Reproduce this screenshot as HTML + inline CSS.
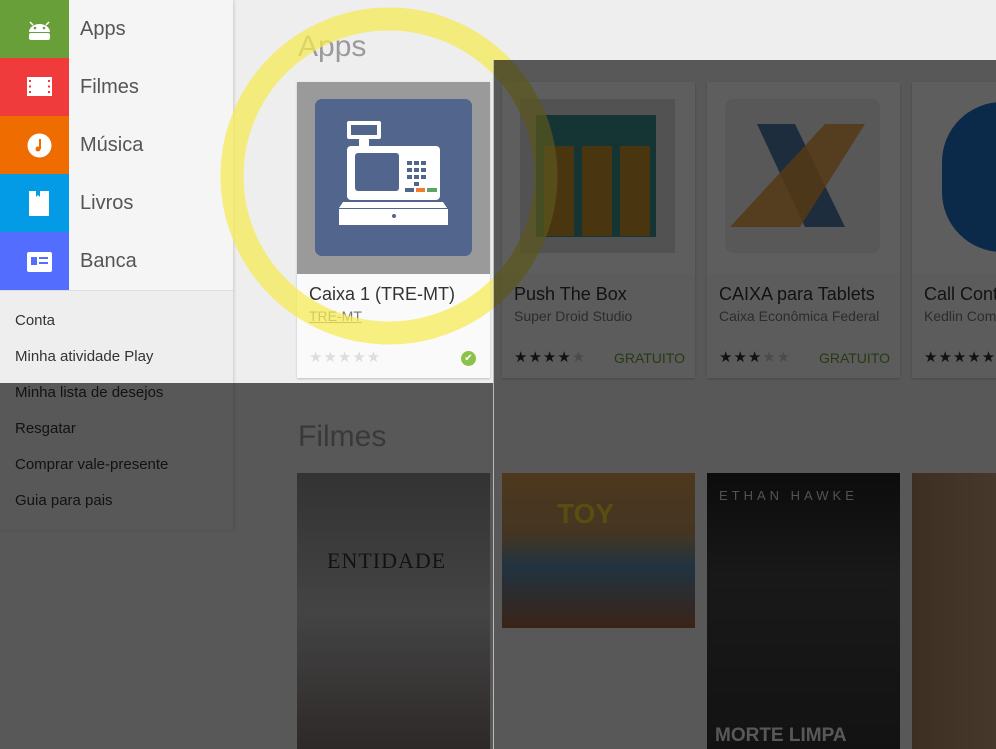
<!DOCTYPE html>
<html><head><meta charset="utf-8"><style>
*{margin:0;padding:0;box-sizing:border-box}
body{width:996px;height:749px;overflow:hidden;position:relative;background:#eeeeee;font-family:"Liberation Sans",sans-serif}
.abs{position:absolute}
.menu{left:0;top:0;width:233px;height:530px;background:#f3f3f3;box-shadow:1px 0 3px rgba(0,0,0,.15)}
.row{position:absolute;left:0;width:233px;height:58px;background:#f5f5f5}
.row .ic{position:absolute;left:0;top:0;width:69px;height:58px}
.row span{position:absolute;left:80px;top:18px;font-size:20px;color:#555}
.lower{position:absolute;left:0;top:290px;width:233px;height:240px;background:#eeeeee;border-top:1px solid #ddd}
.lk{position:absolute;left:15px;font-size:15px;color:#333}
.h{font-size:30px;color:#9a9a9a;font-weight:300;position:absolute;left:298px}
.card{position:absolute;top:82px;width:193px;height:296px;background:#fafafa;box-shadow:0 1px 2px rgba(0,0,0,.2)}
.card .img{position:absolute;left:0;top:0;width:193px;height:192px;background:#fff}
.card .t{position:absolute;left:12px;top:202px;font-size:18px;color:#333;white-space:nowrap;width:170px;overflow:hidden}
.card .s{position:absolute;left:12px;top:226px;font-size:14px;color:#777;white-space:nowrap;width:170px;overflow:hidden}
.card .st{position:absolute;left:12px;top:266px;font-size:15px;color:#ddd;letter-spacing:1px}
.card .p{position:absolute;right:10px;top:268px;font-size:14px;color:#689f38}
.poster{position:absolute;top:473px;width:193px}
</style></head><body>

<div class="h" style="top:30px">Apps</div>
<div class="card" style="left:297px">
 <div class="img" style="background:#9a9a9a">
  <svg class="abs" style="left:18px;top:17px" width="157" height="157" viewBox="0 0 157 157">
   <rect width="157" height="157" rx="7" fill="#52658c"/>
   <rect x="32" y="22" width="34" height="18" rx="2" fill="#fff"/><rect x="36" y="26" width="26" height="10" fill="#52658c"/>
   <rect x="44" y="40" width="10" height="7" fill="#fff"/>
   <rect x="32" y="47" width="93" height="54" rx="4" fill="#fff"/>
   <rect x="40" y="54" width="44" height="38" rx="3" fill="#52658c"/>
   <g fill="#52658c"><rect x="92" y="62" width="5" height="4"/><rect x="99" y="62" width="5" height="4"/><rect x="106" y="62" width="5" height="4"/>
   <rect x="92" y="69" width="5" height="4"/><rect x="99" y="69" width="5" height="4"/><rect x="106" y="69" width="5" height="4"/>
   <rect x="92" y="76" width="5" height="4"/><rect x="99" y="76" width="5" height="4"/><rect x="106" y="76" width="5" height="4"/><rect x="99" y="83" width="5" height="4"/>
   <rect x="90" y="89" width="9" height="4"/></g><rect x="101" y="89" width="9" height="4" fill="#ef7d2e"/><rect x="112" y="89" width="10" height="4" fill="#5aa469"/>
   <path d="M24 109 L28 103 H128 L132 109 Z" fill="#fff"/>
   <rect x="24" y="110" width="109" height="16" fill="#fff"/><circle cx="79" cy="117" r="2" fill="#52658c"/>
  </svg>
 </div>
 <div class="t">Caixa 1 (TRE-MT)</div>
 <div class="s" style="text-decoration:underline">TRE-MT</div>
 <div class="st">★★★★★</div>
 <div class="abs" style="left:164px;top:269px;width:15px;height:15px;border-radius:50%;background:#8bc34a;color:#fff;font-size:10px;text-align:center;line-height:15px">✔</div>
</div>
<div class="card" style="left:502px">
 <div class="img"><div class="abs" style="left:18px;top:17px;width:155px;height:154px;background:#ddd"></div><div class="abs" style="left:34px;top:33px;width:120px;height:122px;background:#3a8e8e"></div>
 <div class="abs" style="left:42px;top:64px;width:110px;height:90px;background:repeating-linear-gradient(90deg,#c9902f 0 30px,transparent 30px 38px)"></div></div>
 <div class="t">Push The Box</div><div class="s">Super Droid Studio</div>
 <div class="st" style="color:#333">★★★★<span style="color:#ccc">★</span></div><div class="p">GRATUITO</div>
</div>
<div class="card" style="left:707px">
 <div class="img"><div class="abs" style="left:18px;top:17px;width:155px;height:154px;background:#eee;border-radius:8px"></div>
 <svg class="abs" style="left:18px;top:17px" width="155" height="155"><path d="M32 25 H70 L120 128 H80Z" fill="#4f7aa8"/><path d="M100 25 H140 L75 128 H5Z" fill="#e59a3a" opacity=".85"/></svg></div>
 <div class="t">CAIXA para Tablets</div><div class="s">Caixa Econômica Federal</div>
 <div class="st" style="color:#333">★★★<span style="color:#ccc">★★</span></div><div class="p">GRATUITO</div>
</div>
<div class="card" style="left:912px">
 <div class="img"><div class="abs" style="left:30px;top:20px;width:120px;height:150px;background:#1f6fc4;border-radius:60px 0 0 60px"></div></div>
 <div class="t">Call Control</div><div class="s">Kedlin Company</div>
 <div class="st" style="color:#333">★★★★★</div>
</div>

<div class="h" style="top:420px">Filmes</div>
<div class="poster" style="left:297px;height:276px;background:linear-gradient(#8a8a8a,#b9b9b9 50%,#7e7070)"><div class="abs" style="left:30px;top:75px;font-family:'Liberation Serif',serif;font-size:22px;color:#333;letter-spacing:1px">ENTIDADE</div></div>
<div class="poster" style="left:502px;height:155px;background:linear-gradient(#d49850,#b89060 40%,#5a8cb0 60%,#a06040)"><div class="abs" style="left:55px;top:25px;font-size:28px;font-weight:bold;color:#f2d02a">TOY</div></div>
<div class="poster" style="left:707px;height:276px;background:linear-gradient(#222,#444 40%,#333)"><div class="abs" style="left:12px;top:15px;font-size:13px;color:#ddd;letter-spacing:4px">ETHAN HAWKE</div><div class="abs" style="left:8px;top:252px;font-size:19px;color:#eee;font-weight:bold">MORTE LIMPA</div></div>
<div class="poster" style="left:912px;height:276px;background:linear-gradient(90deg,#a98060,#d8b890)"></div>

<div class="abs menu">
 <div class="row" style="top:0"><div class="ic" style="background:#689f38"><svg class="abs" style="left:27px;top:17px" width="25" height="25"><path d="M3 5 L6 8 M22 5 L19 8" stroke="#fff" stroke-width="1.5"/><path d="M2 15 A10.5 8 0 0 1 23 15 Z" fill="#fff"/><rect x="2" y="16" width="21" height="7" rx="2" fill="#fff"/><circle cx="8" cy="11" r="1.3" fill="#689f38"/><circle cx="17" cy="11" r="1.3" fill="#689f38"/></svg></div><span>Apps</span></div>
 <div class="row" style="top:58px"><div class="ic" style="background:#ef3b3b"><svg class="abs" style="left:27px;top:19px" width="25" height="20"><rect x="0" y="0" width="25" height="19" fill="#fff"/><g fill="#ef3b3b"><rect x="2" y="3" width="2" height="2"/><rect x="2" y="8.5" width="2" height="2"/><rect x="2" y="14" width="2" height="2"/><rect x="21" y="3" width="2" height="2"/><rect x="21" y="8.5" width="2" height="2"/><rect x="21" y="14" width="2" height="2"/></g></svg></div><span>Filmes</span></div>
 <div class="row" style="top:116px"><div class="ic" style="background:#ef6c00"><svg class="abs" style="left:27px;top:17px" width="25" height="25"><circle cx="12.5" cy="12.5" r="12" fill="#fff"/><path d="M13 6 V16" stroke="#ef6c00" stroke-width="2"/><circle cx="11" cy="16" r="2.5" fill="#ef6c00"/></svg></div><span>Música</span></div>
 <div class="row" style="top:174px"><div class="ic" style="background:#039be5"><svg class="abs" style="left:29px;top:17px" width="20" height="25"><path d="M0 0 H7 V6 L9 4 L11 6 V0 H20 V25 H0Z" fill="#fff"/></svg></div><span>Livros</span></div>
 <div class="row" style="top:232px"><div class="ic" style="background:#536dfe"><svg class="abs" style="left:27px;top:20px" width="25" height="20"><rect width="25" height="20" rx="2" fill="#fff"/><rect x="4" y="5" width="6" height="8" fill="#536dfe"/><rect x="12" y="5" width="9" height="2" fill="#536dfe"/><rect x="12" y="10" width="9" height="2" fill="#536dfe"/></svg></div><span>Banca</span></div>
 <div class="lower">
  <div class="lk" style="top:21px">Conta</div>
  <div class="lk" style="top:57px">Minha atividade Play</div>
  <div class="lk" style="top:93px">Minha lista de desejos</div>
  <div class="lk" style="top:129px">Resgatar</div>
  <div class="lk" style="top:165px">Comprar vale-presente</div>
  <div class="lk" style="top:201px">Guia para pais</div>
 </div>
</div>

<svg class="abs" style="left:0;top:0" width="996" height="749"><circle cx="389" cy="176" r="157" fill="none" stroke="rgba(245,234,80,.72)" stroke-width="23"/></svg>

<div class="abs" style="left:493px;top:60px;width:503px;height:323px;background:rgba(0,0,0,.63)"></div>
<div class="abs" style="left:0;top:383px;width:996px;height:366px;background:rgba(0,0,0,.63)"></div>
<div class="abs" style="left:493px;top:60px;width:1px;height:689px;background:#bbb"></div>
</body></html>
